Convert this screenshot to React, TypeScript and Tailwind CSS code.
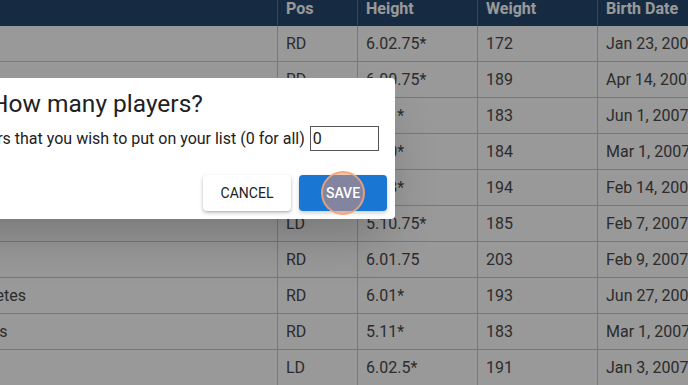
import React from 'react';

type Player = {
  name: string;
  pos: string;
  height: string;
  weight: string;
  birth: string;
};

const players: Player[] = [
  { name: 'Ben Cole', pos: 'RD', height: '6.02.75*', weight: '172', birth: 'Jan 23, 2007' },
  { name: 'Luke Hart', pos: 'RD', height: '6.00.75*', weight: '189', birth: 'Apr 14, 2007' },
  { name: 'Owen Marsh', pos: 'RD', height: '6.01*', weight: '183', birth: 'Jun 1, 2007' },
  { name: 'Jack Price', pos: 'LD', height: '6.00*', weight: '184', birth: 'Mar 1, 2007' },
  { name: 'Liam Shaw', pos: 'RD', height: '6.03*', weight: '194', birth: 'Feb 14, 2007' },
  { name: 'Max Young', pos: 'LD', height: '5.10.75*', weight: '185', birth: 'Feb 7, 2007' },
  { name: 'Eli Ward', pos: 'RD', height: '6.01.75', weight: '203', birth: 'Feb 9, 2007' },
  { name: 'Nikolas Papapetetes', pos: 'RD', height: '6.01*', weight: '193', birth: 'Jun 27, 2007' },
  { name: 'Brendan Mathews', pos: 'RD', height: '5.11*', weight: '183', birth: 'Mar 1, 2007' },
  { name: 'Sam Reid', pos: 'LD', height: '6.02.5*', weight: '191', birth: 'Jan 3, 2007' },
];

const App = () => {
  return (
    <div
      className="relative w-[688px] h-[385px] overflow-hidden bg-white"
      style={{ fontFamily: 'Roboto, "Liberation Sans", sans-serif' }}
    >
      {/* таблица игроков */}
      <div className="-mt-[9px] -ml-[130px] w-[900px]">
        <div className="flex h-[35px] bg-[#25486f] text-white font-bold text-[16px]">
          <div className="w-[407px] flex items-center px-2">Name</div>
          <div className="w-[80px] flex items-center pl-2 border-l border-[#5d7592]">Pos</div>
          <div className="w-[120px] flex items-center pl-2 border-l border-[#5d7592]">Height</div>
          <div className="w-[120px] flex items-center pl-2 border-l border-[#5d7592]">Weight</div>
          <div className="flex-1 flex items-center pl-2 border-l border-[#5d7592]">Birth Date</div>
        </div>
        {players.map((p, i) => (
          <div key={i} className="flex h-[36px] border-b border-[#c8c8c8] text-[16px] text-[#4a4a4a]">
            <div className="w-[407px] flex items-center pl-[9px] whitespace-nowrap">{p.name}</div>
            <div className="w-[80px] flex items-center pl-2 border-l border-[#c8c8c8]">{p.pos}</div>
            <div className="w-[120px] flex items-center pl-2 border-l border-[#c8c8c8]">{p.height}</div>
            <div className="w-[120px] flex items-center pl-2 border-l border-[#c8c8c8]">{p.weight}</div>
            <div className="flex-1 flex items-center pl-2 border-l border-[#c8c8c8] whitespace-nowrap">{p.birth}</div>
          </div>
        ))}
      </div>

      {/* затемнение */}
      <div className="absolute inset-0 bg-black/40" />

      {/* диалог */}
      <div className="absolute top-[78px] left-[-205px] w-[600px] bg-white rounded shadow-2xl">
        <h2 className="text-center text-[24.5px] leading-8 pt-[10px] pl-[4px] text-[#212121] font-normal">How many players?</h2>
        <div className="flex items-center pl-[20px] mt-[6px] text-[16px] leading-6 text-[#212121] whitespace-nowrap">
          <span>Enter the number of players that you wish to put on your list (0 for all)</span>
          <input
            type="text"
            defaultValue="0"
            className="ml-[5px] w-[69px] h-[25px] border border-[#555] px-[2px] text-[16px] text-[#212121] outline-none"
          />
        </div>
        <div className="flex justify-end gap-2 p-2 mt-[16px]">
          <button className="w-[88px] h-9 rounded bg-white text-[14px] font-normal text-[#212121] shadow-[0_2px_4px_rgba(0,0,0,0.2),0_1px_2px_rgba(0,0,0,0.14)]">
            CANCEL
          </button>
          <button className="relative w-[88px] h-9 rounded bg-[#1976d2] text-[14px] font-medium text-white shadow-[0_2px_4px_rgba(0,0,0,0.2)]">
            <span className="absolute left-1/2 top-1/2 -translate-x-1/2 -translate-y-1/2 w-[44px] h-[44px] rounded-full bg-[rgba(235,145,110,0.5)] border-2 border-[rgba(245,165,120,0.85)]" />
            <span className="relative">SAVE</span>
          </button>
        </div>
      </div>
    </div>
  );
};

export default App;
